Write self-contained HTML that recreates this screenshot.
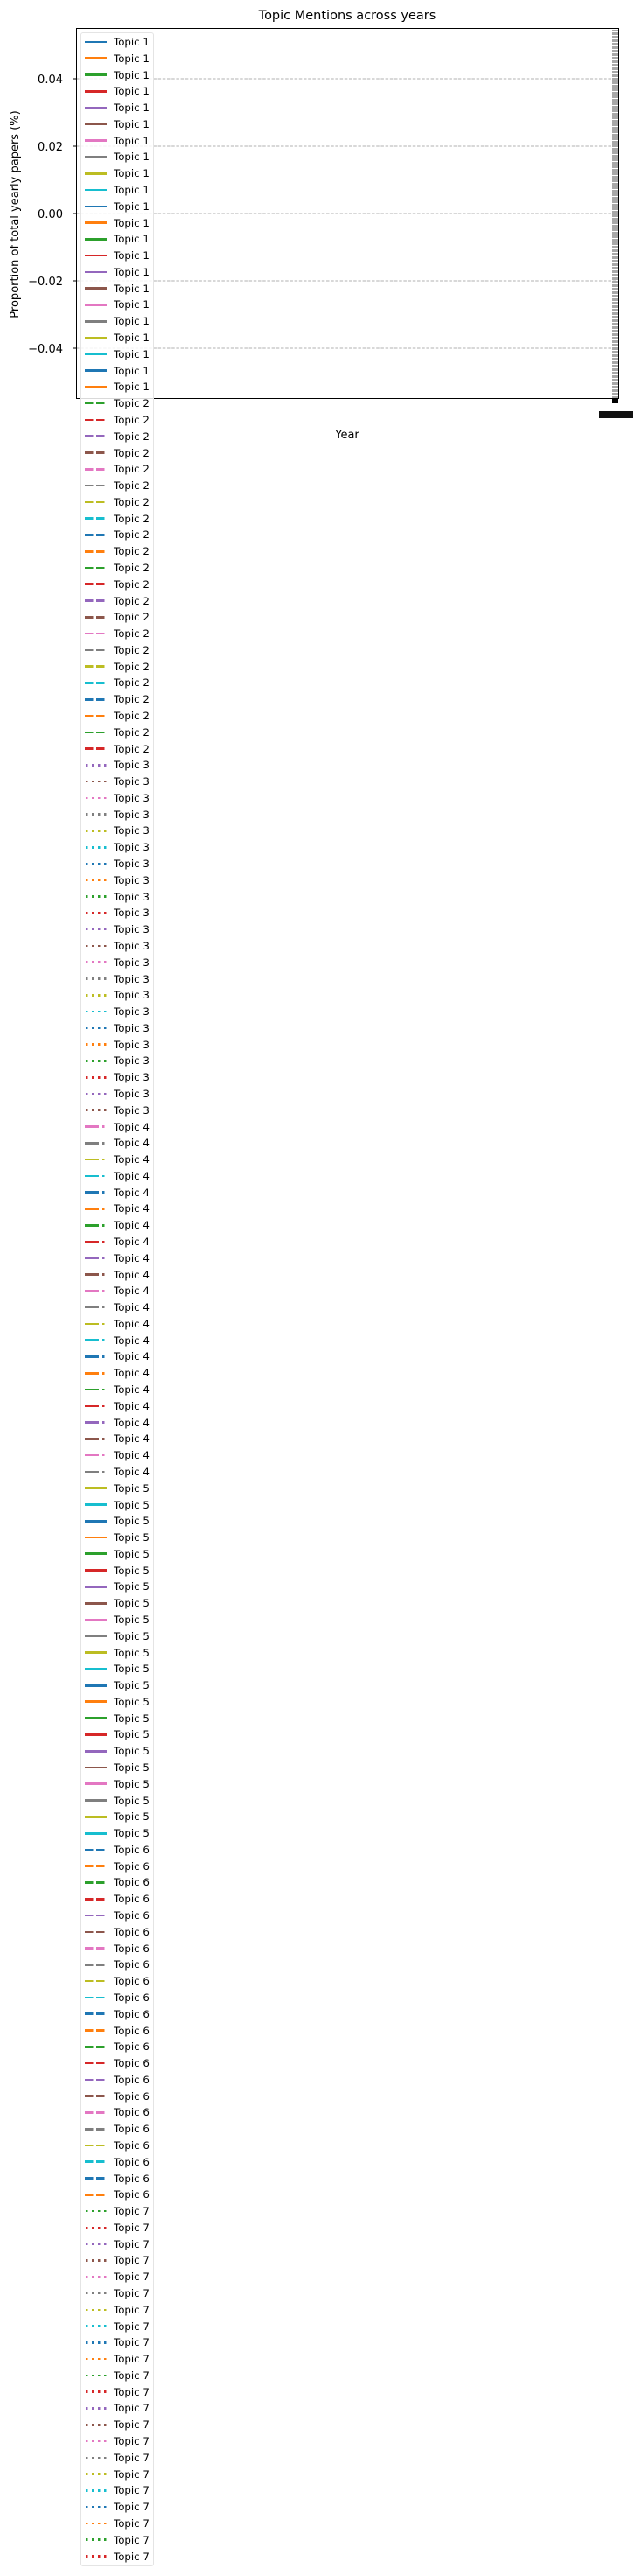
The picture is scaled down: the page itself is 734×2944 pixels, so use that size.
<!DOCTYPE html>
<html><head><meta charset="utf-8">
<style>
html,body{margin:0;padding:0;background:#fff;}
body{width:734px;height:2944px;position:relative;overflow:hidden;font-family:"DejaVu Sans","Liberation Sans",sans-serif;}
svg.ax{position:absolute;left:0;top:0;}
.leg{position:absolute;left:92px;top:37px;width:84px;height:2896px;background:rgba(255,255,255,0.85);border:1px solid #e4e4e4;border-radius:3px;box-sizing:border-box;}
.rows{position:absolute;left:93px;top:38.6px;}
.rows div{height:18.79px;display:flex;align-items:center;font-size:11.8px;color:#000;white-space:nowrap;}
.rows i{display:inline-block;width:25px;height:2.6px;margin-left:4px;margin-right:8px;}
.s1{background:currentColor;}
.s5{background:currentColor;height:2.8px!important;}
.s2{background:repeating-linear-gradient(90deg,currentColor 0 9.5px,transparent 9.5px 13px);}
.s3{background:repeating-linear-gradient(90deg,currentColor 0 2.6px,transparent 2.6px 7px);margin-left:5px!important;width:24px!important;}
.s4{background:linear-gradient(90deg,currentColor 0 16px,transparent 16px 20px,currentColor 20px 22.6px,transparent 22.6px);}
.c0{color:#1f77b4}.c1{color:#ff7f0e}.c2{color:#2ca02c}.c3{color:#d62728}.c4{color:#9467bd}.c5{color:#8c564b}.c6{color:#e377c2}.c7{color:#7f7f7f}.c8{color:#bcbd22}.c9{color:#17becf}
</style></head><body>
<svg class="ax" width="734" height="520" xmlns="http://www.w3.org/2000/svg">
<defs><pattern id="tk" width="8" height="4" patternUnits="userSpaceOnUse" y="33"><rect width="8" height="3" fill="#a8a8a8"/></pattern></defs>
<text x="397" y="22" font-size="14.5" text-anchor="middle" font-family="DejaVu Sans, Liberation Sans, sans-serif">Topic Mentions across years</text>
<g stroke="#b0b0b0" stroke-width="0.9" stroke-dasharray="3.5,1.7">
<line x1="87" x2="706" y1="90" y2="90"/><line x1="87" x2="706" y1="167" y2="167"/><line x1="87" x2="706" y1="244" y2="244"/><line x1="87" x2="706" y1="321" y2="321"/><line x1="87" x2="706" y1="398" y2="398"/>
</g>
<rect x="700" y="34" width="6" height="421" fill="url(#tk)"/>
<rect x="87.5" y="32.5" width="620" height="423" fill="none" stroke="#000" stroke-width="1"/>
<rect x="700" y="455" width="7" height="6" fill="#000"/>
<rect x="685" y="470" width="39" height="8" fill="#111"/>
<g stroke="#000" stroke-width="1"><line x1="83" x2="87" y1="90" y2="90"/><line x1="83" x2="87" y1="167" y2="167"/><line x1="83" x2="87" y1="244" y2="244"/><line x1="83" x2="87" y1="321" y2="321"/><line x1="83" x2="87" y1="398" y2="398"/></g>
<g font-size="13" text-anchor="end" font-family="DejaVu Sans, Liberation Sans, sans-serif">
<text x="72" y="95">0.04</text><text x="72" y="172">0.02</text><text x="72" y="249">0.00</text><text x="72" y="326">−0.02</text><text x="72" y="403">−0.04</text>
</g>
<text transform="translate(21,245) rotate(-90)" font-size="13" text-anchor="middle" font-family="DejaVu Sans, Liberation Sans, sans-serif">Proportion of total yearly papers (%)</text>
<text x="397" y="501" font-size="13" text-anchor="middle" font-family="DejaVu Sans, Liberation Sans, sans-serif">Year</text>
</svg>
<div class="leg"></div>
<div class="rows">
<div><i class="s1 c0"></i>Topic 1</div><div><i class="s1 c1"></i>Topic 1</div><div><i class="s1 c2"></i>Topic 1</div><div><i class="s1 c3"></i>Topic 1</div><div><i class="s1 c4"></i>Topic 1</div><div><i class="s1 c5"></i>Topic 1</div><div><i class="s1 c6"></i>Topic 1</div><div><i class="s1 c7"></i>Topic 1</div><div><i class="s1 c8"></i>Topic 1</div><div><i class="s1 c9"></i>Topic 1</div>
<div><i class="s1 c0"></i>Topic 1</div><div><i class="s1 c1"></i>Topic 1</div><div><i class="s1 c2"></i>Topic 1</div><div><i class="s1 c3"></i>Topic 1</div><div><i class="s1 c4"></i>Topic 1</div><div><i class="s1 c5"></i>Topic 1</div><div><i class="s1 c6"></i>Topic 1</div><div><i class="s1 c7"></i>Topic 1</div><div><i class="s1 c8"></i>Topic 1</div><div><i class="s1 c9"></i>Topic 1</div>
<div><i class="s1 c0"></i>Topic 1</div><div><i class="s1 c1"></i>Topic 1</div>
<div><i class="s2 c2"></i>Topic 2</div><div><i class="s2 c3"></i>Topic 2</div><div><i class="s2 c4"></i>Topic 2</div><div><i class="s2 c5"></i>Topic 2</div><div><i class="s2 c6"></i>Topic 2</div><div><i class="s2 c7"></i>Topic 2</div><div><i class="s2 c8"></i>Topic 2</div><div><i class="s2 c9"></i>Topic 2</div>
<div><i class="s2 c0"></i>Topic 2</div><div><i class="s2 c1"></i>Topic 2</div><div><i class="s2 c2"></i>Topic 2</div><div><i class="s2 c3"></i>Topic 2</div><div><i class="s2 c4"></i>Topic 2</div><div><i class="s2 c5"></i>Topic 2</div><div><i class="s2 c6"></i>Topic 2</div><div><i class="s2 c7"></i>Topic 2</div><div><i class="s2 c8"></i>Topic 2</div><div><i class="s2 c9"></i>Topic 2</div>
<div><i class="s2 c0"></i>Topic 2</div><div><i class="s2 c1"></i>Topic 2</div><div><i class="s2 c2"></i>Topic 2</div><div><i class="s2 c3"></i>Topic 2</div>
<div><i class="s3 c4"></i>Topic 3</div><div><i class="s3 c5"></i>Topic 3</div><div><i class="s3 c6"></i>Topic 3</div><div><i class="s3 c7"></i>Topic 3</div><div><i class="s3 c8"></i>Topic 3</div><div><i class="s3 c9"></i>Topic 3</div>
<div><i class="s3 c0"></i>Topic 3</div><div><i class="s3 c1"></i>Topic 3</div><div><i class="s3 c2"></i>Topic 3</div><div><i class="s3 c3"></i>Topic 3</div><div><i class="s3 c4"></i>Topic 3</div><div><i class="s3 c5"></i>Topic 3</div><div><i class="s3 c6"></i>Topic 3</div><div><i class="s3 c7"></i>Topic 3</div><div><i class="s3 c8"></i>Topic 3</div><div><i class="s3 c9"></i>Topic 3</div>
<div><i class="s3 c0"></i>Topic 3</div><div><i class="s3 c1"></i>Topic 3</div><div><i class="s3 c2"></i>Topic 3</div><div><i class="s3 c3"></i>Topic 3</div><div><i class="s3 c4"></i>Topic 3</div><div><i class="s3 c5"></i>Topic 3</div>
<div><i class="s4 c6"></i>Topic 4</div><div><i class="s4 c7"></i>Topic 4</div><div><i class="s4 c8"></i>Topic 4</div><div><i class="s4 c9"></i>Topic 4</div>
<div><i class="s4 c0"></i>Topic 4</div><div><i class="s4 c1"></i>Topic 4</div><div><i class="s4 c2"></i>Topic 4</div><div><i class="s4 c3"></i>Topic 4</div><div><i class="s4 c4"></i>Topic 4</div><div><i class="s4 c5"></i>Topic 4</div><div><i class="s4 c6"></i>Topic 4</div><div><i class="s4 c7"></i>Topic 4</div><div><i class="s4 c8"></i>Topic 4</div><div><i class="s4 c9"></i>Topic 4</div>
<div><i class="s4 c0"></i>Topic 4</div><div><i class="s4 c1"></i>Topic 4</div><div><i class="s4 c2"></i>Topic 4</div><div><i class="s4 c3"></i>Topic 4</div><div><i class="s4 c4"></i>Topic 4</div><div><i class="s4 c5"></i>Topic 4</div><div><i class="s4 c6"></i>Topic 4</div><div><i class="s4 c7"></i>Topic 4</div>
<div><i class="s5 c8"></i>Topic 5</div><div><i class="s5 c9"></i>Topic 5</div>
<div><i class="s5 c0"></i>Topic 5</div><div><i class="s5 c1"></i>Topic 5</div><div><i class="s5 c2"></i>Topic 5</div><div><i class="s5 c3"></i>Topic 5</div><div><i class="s5 c4"></i>Topic 5</div><div><i class="s5 c5"></i>Topic 5</div><div><i class="s5 c6"></i>Topic 5</div><div><i class="s5 c7"></i>Topic 5</div><div><i class="s5 c8"></i>Topic 5</div><div><i class="s5 c9"></i>Topic 5</div>
<div><i class="s5 c0"></i>Topic 5</div><div><i class="s5 c1"></i>Topic 5</div><div><i class="s5 c2"></i>Topic 5</div><div><i class="s5 c3"></i>Topic 5</div><div><i class="s5 c4"></i>Topic 5</div><div><i class="s5 c5"></i>Topic 5</div><div><i class="s5 c6"></i>Topic 5</div><div><i class="s5 c7"></i>Topic 5</div><div><i class="s5 c8"></i>Topic 5</div><div><i class="s5 c9"></i>Topic 5</div>
<div><i class="s2 c0"></i>Topic 6</div><div><i class="s2 c1"></i>Topic 6</div><div><i class="s2 c2"></i>Topic 6</div><div><i class="s2 c3"></i>Topic 6</div><div><i class="s2 c4"></i>Topic 6</div><div><i class="s2 c5"></i>Topic 6</div><div><i class="s2 c6"></i>Topic 6</div><div><i class="s2 c7"></i>Topic 6</div><div><i class="s2 c8"></i>Topic 6</div><div><i class="s2 c9"></i>Topic 6</div>
<div><i class="s2 c0"></i>Topic 6</div><div><i class="s2 c1"></i>Topic 6</div><div><i class="s2 c2"></i>Topic 6</div><div><i class="s2 c3"></i>Topic 6</div><div><i class="s2 c4"></i>Topic 6</div><div><i class="s2 c5"></i>Topic 6</div><div><i class="s2 c6"></i>Topic 6</div><div><i class="s2 c7"></i>Topic 6</div><div><i class="s2 c8"></i>Topic 6</div><div><i class="s2 c9"></i>Topic 6</div>
<div><i class="s2 c0"></i>Topic 6</div><div><i class="s2 c1"></i>Topic 6</div>
<div><i class="s3 c2"></i>Topic 7</div><div><i class="s3 c3"></i>Topic 7</div><div><i class="s3 c4"></i>Topic 7</div><div><i class="s3 c5"></i>Topic 7</div><div><i class="s3 c6"></i>Topic 7</div><div><i class="s3 c7"></i>Topic 7</div><div><i class="s3 c8"></i>Topic 7</div><div><i class="s3 c9"></i>Topic 7</div>
<div><i class="s3 c0"></i>Topic 7</div><div><i class="s3 c1"></i>Topic 7</div><div><i class="s3 c2"></i>Topic 7</div><div><i class="s3 c3"></i>Topic 7</div><div><i class="s3 c4"></i>Topic 7</div><div><i class="s3 c5"></i>Topic 7</div><div><i class="s3 c6"></i>Topic 7</div><div><i class="s3 c7"></i>Topic 7</div><div><i class="s3 c8"></i>Topic 7</div><div><i class="s3 c9"></i>Topic 7</div>
<div><i class="s3 c0"></i>Topic 7</div><div><i class="s3 c1"></i>Topic 7</div><div><i class="s3 c2"></i>Topic 7</div><div><i class="s3 c3"></i>Topic 7</div>
</div>
</body></html>
